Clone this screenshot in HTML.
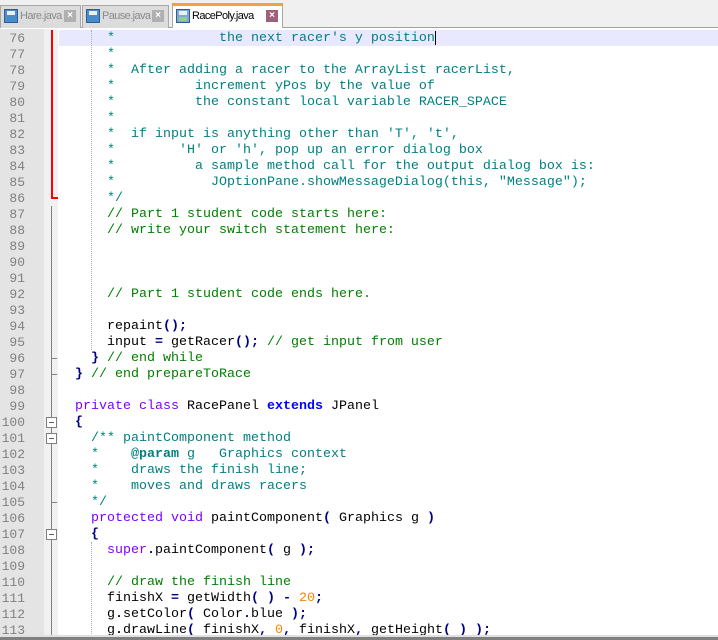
<!DOCTYPE html>
<html><head><meta charset="utf-8"><style>
*{margin:0;padding:0;box-sizing:border-box}
body{width:718px;height:640px;overflow:hidden;background:#fff;position:relative;font-family:"Liberation Sans",sans-serif}
#tabs{position:absolute;left:0;top:0;width:718px;height:28px;background:#f0f0f0;border-bottom:1px solid #a0a0a0}
.tab{position:absolute;top:5px;height:23px;background:#dcdcdc;border:1px solid #a8a8a8;border-bottom:none;font-size:11px;color:#8a8a8a;line-height:20px;padding-left:19px;letter-spacing:-0.6px;white-space:nowrap;overflow:hidden}
.tab.act{top:3px;height:25px;background:#fff;color:#000;border-top:3px solid #f4a13a;line-height:20px}
.ico{position:absolute;left:3px;top:3px;width:14px;height:14px;background:#4a8cc9;border:1px solid #2f5f92}
.ico:after{content:"";position:absolute;left:2px;top:1px;width:8px;height:4px;background:#e8f0f8}
.act .ico{background:#7fa8d0}
.act .ico:before{content:"";position:absolute;left:2px;bottom:1px;width:8px;height:4px;background:#8fd08f}
.x{position:absolute;right:4px;top:4px;width:12px;height:12px;background:#b0b0b0;color:#fff;font-size:10px;line-height:12px;text-align:center;font-weight:bold;letter-spacing:0}
.act .x{background:#a0607a}
#gut{position:absolute;left:0;top:29px;width:44px;height:606px;background:#e4e4e4}
#fold{position:absolute;left:44px;top:29px;width:14px;height:606px;background:#f6f6f6;background-image:linear-gradient(45deg,#ececec 25%,transparent 25%,transparent 75%,#ececec 75%),linear-gradient(45deg,#ececec 25%,transparent 25%,transparent 75%,#ececec 75%);background-size:2px 2px;background-position:0 0,1px 1px}
.ln{position:absolute;left:0;width:25px;text-align:right;font:13px/16px "Liberation Mono",monospace;color:#808080}
.code{position:absolute;left:59px;font:13.33px/16px "Liberation Mono",monospace;white-space:pre;color:#000}
.c{color:#008080}.g{color:#008000}.k{color:#8000ff}.b{color:#0000ff;font-weight:bold}.o{color:#000080;font-weight:bold}.n{color:#ff8000}.cb{color:#008080;font-weight:bold}
#hl{position:absolute;left:59px;top:30px;width:659px;height:16px;background:#e8e8ff}
.vl{position:absolute;width:1px}
.box{position:absolute;left:46px;width:11px;height:11px;border:1px solid #808080;background:#fff}
.box:after{content:"";position:absolute;left:2px;top:4px;width:5px;height:1px;background:#606060}
#bot1{position:absolute;left:0;top:635px;width:718px;height:2px;background:#e0e0e0}
#bot2{position:absolute;left:0;top:637px;width:718px;height:3px;background:#808080}
</style></head><body>
<div id="tabs">
<div class="tab" style="left:0;width:81px"><span class="ico"></span>Hare.java<span class="x">×</span></div>
<div class="tab" style="left:82px;width:87px"><span class="ico"></span>Pause.java<span class="x">×</span></div>
<div class="tab act" style="left:172px;width:111px"><span class="ico"></span>RacePoly.java<span class="x">×</span></div>
</div>
<div id="gut"></div><div id="fold"></div>
<div id="hl"></div>
<div class="vl" style="left:51px;top:30px;height:168px;background:#ff0000;width:2px"></div>
<div style="position:absolute;left:51px;top:197px;width:7px;height:2px;background:#ff0000"></div>
<div class="vl" style="left:51px;top:206px;height:430px;background:#808080"></div>
<div style="position:absolute;left:51px;top:358px;width:6px;height:1px;background:#808080"></div>
<div style="position:absolute;left:51px;top:374px;width:6px;height:1px;background:#808080"></div>
<div style="position:absolute;left:51px;top:502px;width:6px;height:1px;background:#808080"></div>
<div class="box" style="top:417px"></div>
<div class="box" style="top:433px"></div>
<div class="box" style="top:529px"></div>
<div class="vl" style="left:91px;top:30px;height:320px;border-left:1px dotted #b0b0b0"></div>
<div class="vl" style="left:91px;top:542px;height:94px;border-left:1px dotted #b0b0b0"></div>
<div style="position:absolute;left:435px;top:31px;width:1px;height:14px;background:#000"></div>

<div class="ln" style="top:31px">76<br>77<br>78<br>79<br>80<br>81<br>82<br>83<br>84<br>85<br>86<br>87<br>88<br>89<br>90<br>91<br>92<br>93<br>94<br>95<br>96<br>97<br>98<br>99<br>100<br>101<br>102<br>103<br>104<br>105<br>106<br>107<br>108<br>109<br>110<br>111<br>112<br>113</div>

<div class="code" style="top:31px"><span class="c">      *             the next racer's y position
      *
      *  After adding a racer to the ArrayList racerList,
      *          increment yPos by the value of
      *          the constant local variable RACER_SPACE
      *
      *  if input is anything other than 'T', 't',
      *        'H' or 'h', pop up an error dialog box
      *          a sample method call for the output dialog box is:
      *            JOptionPane.showMessageDialog(this, "Message");
      */</span>
      <span class="g">// Part 1 student code starts here:</span>
      <span class="g">// write your switch statement here:</span>



      <span class="g">// Part 1 student code ends here.</span>

      repaint<span class="o">();</span>
      input <span class="o">=</span> getRacer<span class="o">();</span> <span class="g">// get input from user</span>
    <span class="o">}</span> <span class="g">// end while</span>
  <span class="o">}</span> <span class="g">// end prepareToRace</span>

  <span class="k">private</span> <span class="k">class</span> RacePanel <span class="b">extends</span> JPanel
  <span class="o">{</span>
    <span class="c">/** paintComponent method
    *    <span class="cb">@param</span> g   Graphics context
    *    draws the finish line;
    *    moves and draws racers
    */</span>
    <span class="k">protected</span> <span class="k">void</span> paintComponent<span class="o">(</span> Graphics g <span class="o">)</span>
    <span class="o">{</span>
      <span class="k">super</span><span class="o">.</span>paintComponent<span class="o">(</span> g <span class="o">);</span>

      <span class="g">// draw the finish line</span>
      finishX <span class="o">=</span> getWidth<span class="o">( )</span> <span class="o">-</span> <span class="n">20</span><span class="o">;</span>
      g<span class="o">.</span>setColor<span class="o">(</span> Color<span class="o">.</span>blue <span class="o">);</span>
      g<span class="o">.</span>drawLine<span class="o">(</span> finishX<span class="o">,</span> <span class="n">0</span><span class="o">,</span> finishX<span class="o">,</span> getHeight<span class="o">( ) );</span></div>
<div id="bot1"></div><div id="bot2"></div>
</body></html>
